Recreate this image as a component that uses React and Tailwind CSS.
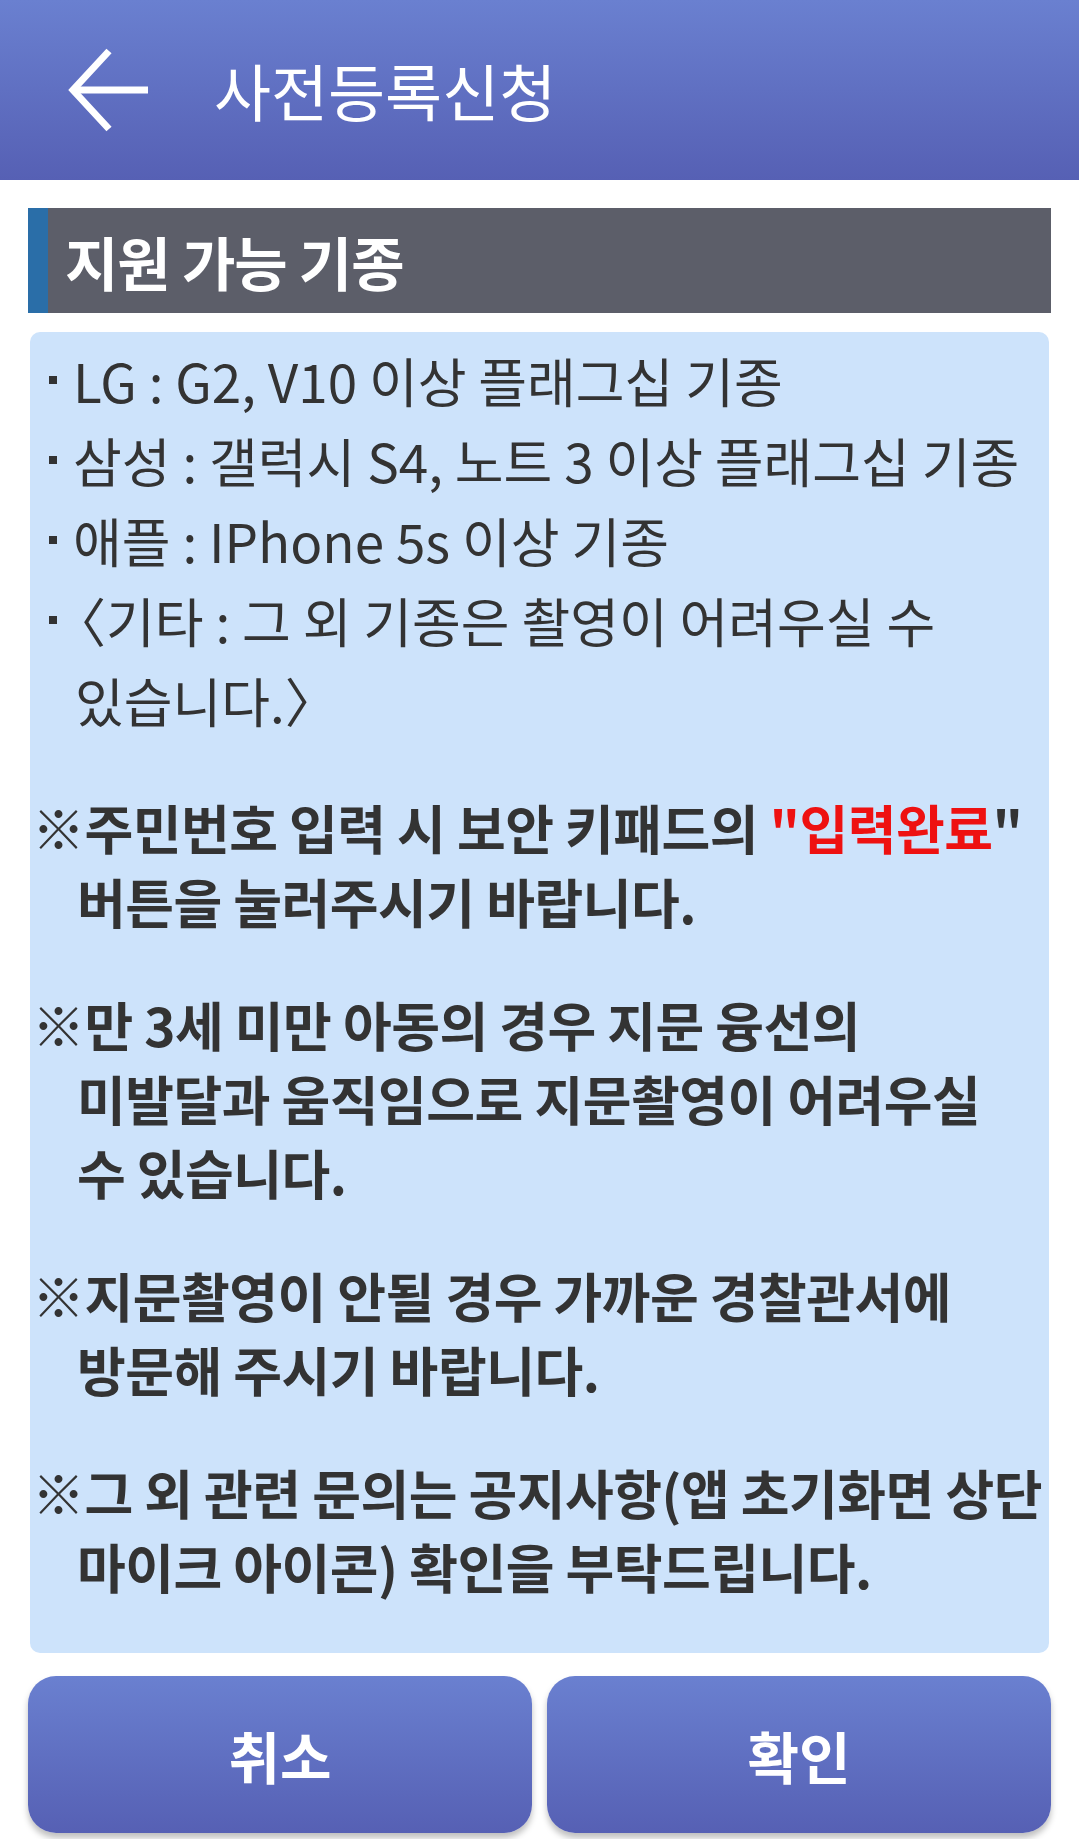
import React from 'react'

const FONT = { fontFamily: '"Noto Sans CJK KR", "Noto Sans", sans-serif' }

function BackArrow() {
  return (
    <svg width="84" height="84" viewBox="0 0 84 84" fill="none" stroke="white" strokeWidth="7" strokeLinecap="butt" strokeLinejoin="miter">
      <path d="M7 42 H82" />
      <path d="M43 3 L7 42 L43 81" />
    </svg>
  )
}

function Bullet({ children, cont }) {
  if (cont) return <div className="pl-[45px] whitespace-nowrap">{children}</div>
  return (
    <div className="flex items-center whitespace-nowrap">
      <span className="w-[8px] h-[8px] bg-[#333] ml-[19px] mr-[16px] shrink-0" />
      <span>{children}</span>
    </div>
  )
}

function Note({ lines }) {
  return (
    <div className="mt-[49px]">
      {lines.map((l, i) => (
        <div key={i} className={`whitespace-nowrap ${i === 0 ? 'pl-[2px]' : 'pl-[47px]'}`}>
          {i === 0 ? '※' : ''}{l}
        </div>
      ))}
    </div>
  )
}

export default function App() {
  return (
    <div className="w-full min-h-screen bg-white" style={FONT}>
      {/* Header */}
      <header className="h-[180px] bg-gradient-to-b from-[#6a80d0] to-[#5660b4] flex items-center pl-[66px]">
        <BackArrow />
        <h1 className="ml-[64px] text-[62px] text-white font-normal leading-none">사전등록신청</h1>
      </header>

      <main className="px-[28px] pt-[28px]">
        {/* Section title */}
        <div className="h-[105px] bg-[#5c5e69] border-l-[20px] border-[#2a6ea8] flex items-center pl-[17px]">
          <h2 className="text-[58px] font-bold text-white leading-none tracking-[-1px]">지원 가능 기종</h2>
        </div>

        {/* Content box */}
        <div className="mt-[19px] mx-[2px] h-[1321px] bg-[#cde3fb] rounded-[10px] pt-[8px] text-[#333]">
          <div className="text-[53px] leading-[80px] font-normal">
            <Bullet>LG : G2, V10 이상 플래그십 기종</Bullet>
            <Bullet>삼성 : 갤럭시 S4, 노트 3 이상 플래그십 기종</Bullet>
            <Bullet>애플 : IPhone 5s 이상 기종</Bullet>
            <Bullet><span className="-ml-[20px]">〈</span>기타 : 그 외 기종은 촬영이 어려우실 수</Bullet>
            <Bullet cont>있습니다.〉</Bullet>
          </div>

          <div className="mt-[50px] text-[53px] leading-[74px] font-bold tracking-[-0.5px] text-[#333]">
            <div>
              <div className="pl-[2px] whitespace-nowrap">
                ※주민번호 입력 시 보안 키패드의 <span className="text-[#ee1111]">"입력완료</span>"
              </div>
              <div className="pl-[47px] whitespace-nowrap">버튼을 눌러주시기 바랍니다.</div>
            </div>
            <Note lines={['만 3세 미만 아동의 경우 지문 융선의', '미발달과 움직임으로 지문촬영이 어려우실', '수 있습니다.']} />
            <Note lines={['지문촬영이 안될 경우 가까운 경찰관서에', '방문해 주시기 바랍니다.']} />
            <Note lines={['그 외 관련 문의는 공지사항(앱 초기화면 상단', '마이크 아이콘) 확인을 부탁드립니다.']} />
          </div>
        </div>

        {/* Buttons */}
        <div className="mt-[23px] flex gap-[15px]">
          <button className="flex-1 h-[157px] rounded-[28px] bg-gradient-to-b from-[#6a80d0] to-[#5660b4] text-white text-[56px] font-bold shadow-[0_5px_6px_rgba(0,0,0,0.25)]">
            취소
          </button>
          <button className="flex-1 h-[157px] rounded-[28px] bg-gradient-to-b from-[#6a80d0] to-[#5660b4] text-white text-[56px] font-bold shadow-[0_5px_6px_rgba(0,0,0,0.25)]">
            확인
          </button>
        </div>
      </main>
    </div>
  )
}
